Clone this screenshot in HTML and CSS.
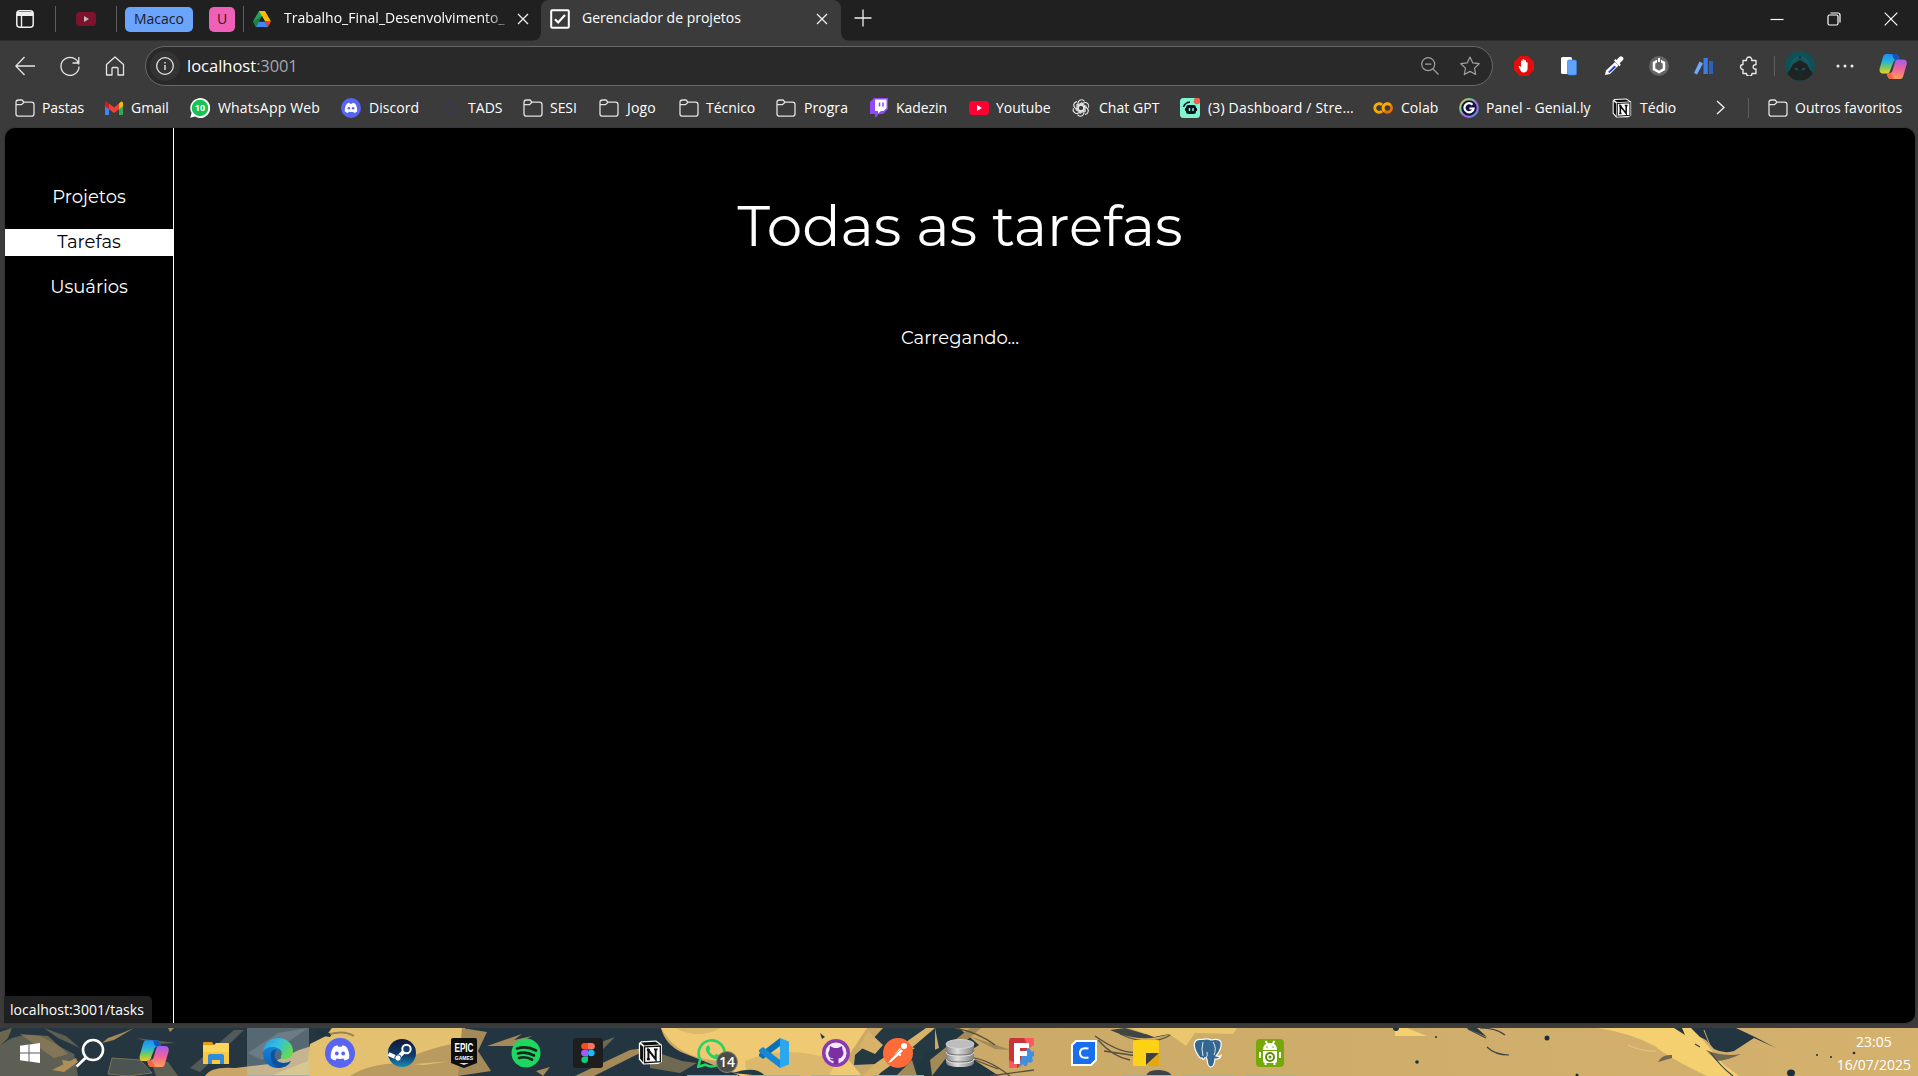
FILE: index.html
```html
<!DOCTYPE html>
<html lang="pt-BR">
<head>
<meta charset="utf-8">
<title>Gerenciador de projetos</title>
<link rel="stylesheet" href="styles.css">
</head>
<body>
<svg class="defs" aria-hidden="true">
  <defs>
    <linearGradient id="cpA" x1="0" y1="0" x2="0" y2="1"><stop offset="0" stop-color="#1b8df5"/><stop offset=".4" stop-color="#2bb4d8"/><stop offset=".7" stop-color="#7ccb55"/><stop offset="1" stop-color="#f7cb2d"/></linearGradient>
    <linearGradient id="cpB" x1="0" y1="0" x2="0" y2="1"><stop offset="0" stop-color="#a35df0"/><stop offset=".5" stop-color="#f0629a"/><stop offset="1" stop-color="#ffa057"/></linearGradient>
    <linearGradient id="edA" x1="0" y1="0" x2="1" y2=".5"><stop offset="0" stop-color="#2596e2"/><stop offset=".5" stop-color="#32bfe0"/><stop offset="1" stop-color="#63d957"/></linearGradient>
    <linearGradient id="edB" x1="0" y1="0" x2="0" y2="1"><stop offset="0" stop-color="#1782d6"/><stop offset="1" stop-color="#0b62b5"/></linearGradient>
    <linearGradient id="stm" x1="0" y1="0" x2="0" y2="1"><stop offset="0" stop-color="#141738"/><stop offset=".6" stop-color="#0e3d6d"/><stop offset="1" stop-color="#168bb8"/></linearGradient>
    <linearGradient id="met" x1="0" x2="1"><stop offset="0" stop-color="#858585"/><stop offset=".4" stop-color="#dedede"/><stop offset="1" stop-color="#808080"/></linearGradient>
    <linearGradient id="gen" x1="0" y1="0" x2="1" y2="1"><stop offset="0" stop-color="#f8b83c"/><stop offset=".3" stop-color="#73d08c"/><stop offset=".6" stop-color="#b35bf0"/><stop offset="1" stop-color="#37a2f0"/></linearGradient>
    <symbol id="folder" viewBox="0 0 20 20"><path d="M1 4.500a2.500 2.500 0 0 1 2.500-2.500H7l2 2.200h7.500a2.500 2.500 0 0 1 2.500 2.500v9a2.500 2.500 0 0 1-2.500 2.500h-13A2.500 2.500 0 0 1 1 15.700zM1 6.700h5.500L9 4.200" fill="none" stroke="#e2e2e2" stroke-width="1.300"/></symbol>
    <symbol id="close" viewBox="0 0 12 12"><path d="M1 1l10 10M11 1L1 11" fill="none" stroke="#eee" stroke-width="1.300"/></symbol>
    <symbol id="copilot" viewBox="0 0 28 28"><path d="M7 2h9c2 0 3 1 3.600 3l1 3h-3c-2 0-3 1-3.500 3L11 19c-.7 2-1.700 2.500-3.500 2.500H4C1 21.500 0 19 .8 16L4 5c.7-2 1.500-3 3-3z" fill="url(#cpA)"/><path d="M13 2h3c2 0 3 1 3.600 3l1 3h-4C14.500 8 14 4 13 2z" fill="#1554b8"/><path d="M21 27h-9c-2 0-3-1-3.500-3l-1-3H10c2 0 3-.8 3.500-2.600L16 10c.6-2 1.600-2.600 3.500-2.600H24c3 0 4.400 2 3.600 5l-3.200 11.100C23.800 26 23 27 21 27z" fill="url(#cpB)"/><path d="M15 27h-3c-2 0-3-1-3.500-3l-1-3H10c3 0 4 4 5 6z" fill="#f06543"/></symbol>
    <symbol id="discord" viewBox="0 0 30 30"><circle cx="15" cy="15" r="15" fill="#5865f2"/><path d="M5.800 20.300C5.200 15.700 6.600 11.500 8.800 8.700c1.200-.8 2.600-1.300 3.700-1.400l.8 1.400h3.400l.8-1.400c1.100.1 2.500.6 3.700 1.400 2.200 2.800 3.600 7 3 11.600-1.500 1.200-3 1.900-4.600 2.200l-1.100-1.900c-2.300.5-4.700.5-7 0l-1.100 1.900c-1.600-.3-3.100-1-4.600-2.200z" fill="#fff"/><circle cx="11.800" cy="15.500" r="1.900" fill="#5865f2"/><circle cx="18.200" cy="15.500" r="1.900" fill="#5865f2"/></symbol>
    <symbol id="notion" viewBox="0 0 24 24"><path d="M3 1.200L17.500.5 23 4.500V21L19.500 23 5 23.500.8 18.500V3z" fill="#fff"/><path d="M2.800 2.500L17 1.700l3.800 2.600L6 5.200z" fill="#111"/><path d="M2 4l3 2.500v14.800L2 18z" fill="#111"/><path d="M6.300 6.600L21.500 5.800v15L6.300 21.800z" fill="#fff" stroke="#111" stroke-width="1.300"/><path d="M10 18.500V9.500l7 9V9M8.500 9.500h3M15.300 9h3.500M8.500 18.500h3" fill="none" stroke="#111" stroke-width="1.900"/></symbol>
    <symbol id="wa" viewBox="0 0 30 30"><path d="M1.200 28.800L3.200 21.500A13 13 0 1 1 8.300 26.700z" fill="none" stroke="#25d366" stroke-width="2.600"/><path d="M10 8c1-1 2-.8 2.400.2l1 2.500c.2.800-1.500 1.700-1 2.500 1 2 2.600 3.400 4.700 4.200.9.300 1.600-1.900 2.500-1.500l2.600 1.300c1 .5.300 2.400-.6 3.100-2.500 1.900-6.400 0-9-2.400C9.700 15 7.300 10.900 10 8z" fill="#25d366"/></symbol>
    <path id="petal" d="M7 10.500V5.300a3.600 3.600 0 0 1 6.500-2M7 8.700l4.400-2.600 4 2.300"/>
  </defs>
</svg>

<div class="screen">
  <header class="tabstrip">
    <div class="strip-left">
      <svg class="ico-ws" viewBox="0 0 18 18"><rect x=".8" y=".8" width="16.400" height="16.400" rx="3" fill="none" stroke="#eee" stroke-width="1.500"/><path d="M1 2h16v4H1z" fill="#eee"/><path d="M5.500 5v12" stroke="#eee" stroke-width="1.400"/></svg>
      <i class="sep"></i>
      <svg class="ico-pin" viewBox="0 0 20 14"><rect width="20" height="14" rx="3.500" fill="#7d132b"/><path d="M8 4l5 3-5 3z" fill="#bbb"/></svg>
      <i class="sep"></i>
      <span class="group blue">Macaco</span>
      <span class="group pink">U</span>
      <i class="sep"></i>
    </div>
    <div class="tab">
      <svg class="ico-drive" viewBox="0 0 18 16"><path d="M6 0h6l-9 16L0 10.500z" fill="#1fa463"/><path d="M6 0h6l6 10.500h-6z" fill="#fbbc04"/><path d="M0 10.500L3 16l3-5.500L9 5z" fill="#188038"/><path d="M6 10.500h6L15 16H3z" fill="#4285f4"/><path d="M12 10.500h6L15 16z" fill="#ea4335"/><path d="M9 5.200l3 5.300H6z" fill="#202020"/></svg>
      <span class="tab-title faded">Trabalho_Final_Desenvolvimento_</span>
      <svg class="ico-x"><use href="#close"/></svg>
    </div>
    <div class="tab active">
      <svg class="ico-check" viewBox="0 0 20 20"><rect x="1.200" y="1.200" width="17.600" height="17.600" rx="1" fill="none" stroke="#fff" stroke-width="2"/><path d="M5 10.200l3.200 3.300L15 6" fill="none" stroke="#fff" stroke-width="2.200"/></svg>
      <span class="tab-title">Gerenciador de projetos</span>
      <svg class="ico-x"><use href="#close"/></svg>
    </div>
    <svg class="ico-plus" viewBox="0 0 18 18"><path d="M9 .5v17M.5 9h17" stroke="#eee" stroke-width="1.300"/></svg>
    <div class="window-buttons">
      <svg viewBox="0 0 14 14"><path d="M.5 7.500h13" stroke="#fff" stroke-width="1.200"/></svg>
      <svg viewBox="0 0 14 14"><rect x="1" y="3" width="10" height="10" rx="1.500" fill="none" stroke="#fff" stroke-width="1.200"/><path d="M3.500 1H11q2 0 2 2v7.500" fill="none" stroke="#fff" stroke-width="1.200"/></svg>
      <svg viewBox="0 0 14 14"><path d="M.7.700l12.600 12.600M13.300.700L.7 13.300" stroke="#fff" stroke-width="1.200"/></svg>
    </div>
  </header>

  <div class="toolbar">
    <nav class="nav-buttons">
      <svg viewBox="0 0 20 20"><path d="M20 10H1M9.500 1L.8 10l8.700 9" fill="none" stroke="#e6e6e6" stroke-width="1.300"/></svg>
      <svg viewBox="0 0 20 20"><path d="M18.800 8.500A9 9 0 1 0 19 10.500M18.800 1v6h-6.300" fill="none" stroke="#e6e6e6" stroke-width="1.300"/></svg>
      <svg viewBox="0 0 20 20"><path d="M1.500 8.500L10 1l8.500 7.500V19h-5.500v-6.500q0-1-1-1H8q-1 0-1 1V19H1.500z" fill="none" stroke="#e6e6e6" stroke-width="1.300" stroke-linejoin="round"/></svg>
    </nav>
    <div class="address">
      <span class="info"><svg viewBox="0 0 18 18"><circle cx="9" cy="9" r="8.300" fill="none" stroke="#e6e6e6" stroke-width="1.300"/><path d="M9 8v5M9 5v1.500" stroke="#e6e6e6" stroke-width="1.400"/></svg></span>
      <span class="url">localhost<span>:3001</span></span>
      <svg class="ico-zoom" viewBox="0 0 18 18"><circle cx="7.200" cy="7.200" r="6.500" fill="none" stroke="#a0a0a0" stroke-width="1.200"/><path d="M12 12l5.500 5.500M4 7.200h6.400" stroke="#a0a0a0" stroke-width="1.200"/></svg>
      <svg class="ico-star" viewBox="0 0 20 20"><path d="M10 1l2.800 5.900 6.400.8-4.700 4.400 1.200 6.400L10 15.400l-5.700 3.100 1.200-6.400L.8 7.700l6.400-.8z" fill="none" stroke="#a0a0a0" stroke-width="1.200" stroke-linejoin="round"/></svg>
    </div>
    <div class="extensions">
      <svg viewBox="0 0 20 20"><path d="M6 0h8l6 6v8l-6 6H6l-6-6V6z" fill="#e40d0d"/><path d="M4.500 10.500l1.300-.7 1.200 1.400V5q.8-1 1.600 0V3.500q.9-1 1.700 0V4.500q.9-1 1.700 0V6.500q1.200-.8 1.600 0v6q-.4 4-4 4-2.500 0-3.300-2.500z" fill="#fff"/></svg>
      <svg viewBox="0 0 20 20"><rect x="2" y="1" width="11" height="17" rx="1.500" fill="#fff"/><rect x="8.500" y="4" width="9" height="15" rx="1.500" fill="#60a5fa" stroke="#3b7fe0" stroke-width=".7"/></svg>
      <svg viewBox="0 0 20 20"><path d="M1 19l1-4.500L11 6l3.500 3.500L6 18z" fill="#fff"/><path d="M4 16l6.500-6.500 1.500 1.500-6.500 6z" fill="#2343c5"/><path d="M10 4.500l5.500 5.700 1.200-1.500-1-1.500 3.500-3.500q.8-2-1-3-1.500-1-3 .5L12.500 4l-1.200-1z" fill="#fff"/></svg>
      <svg viewBox="0 0 20 20"><circle cx="10" cy="10" r="10" fill="#666"/><path d="M10 4l5 2.800v6.400L10 16l-5-2.800V6.800z" fill="#666" stroke="#fff" stroke-width="2.500"/><path d="M8 3h4v4H8z" fill="#666"/><path d="M10 2v4" stroke="#fff" stroke-width="2"/></svg>
      <svg viewBox="0 0 20 20"><path d="M5.500 5.500l3.500 2-6 11-3-1.500z" fill="#76a7fa"/><path d="M9.500 2h4.300v16H9.500z" fill="#3c7cea"/><path d="M15 5h4v13h-4z" fill="#2b5fc0"/></svg>
      <svg viewBox="0 0 20 20"><path d="M4 4.500h3.500a2.700 2.700 0 1 1 5.200 0H17v4.300a2.200 2.200 0 1 0 0 4.200v4.500h-4a2.700 2.700 0 0 1-5.500 0H4v-4a2.500 2.500 0 1 1 0-5z" fill="none" stroke="#e6e6e6" stroke-width="1.400" stroke-linejoin="round"/></svg>
    </div>
    <i class="sep tall"></i>
    <svg class="avatar" viewBox="0 0 30 30"><circle cx="15" cy="15" r="15" fill="#105158"/><circle cx="15" cy="15" r="10" fill="#17646a" opacity=".5"/><path d="M15 9l7 4 3 6 3 3a15 15 0 0 1-26 0l3-3 3-6z" fill="#202322"/><path d="M15 5v3M10.500 18.500l3 1.500M19.500 18.500l-3 1.500M13 24l2-1 2 1" stroke="#0a3338" stroke-width="1.500"/><path d="M10 17.500l3 1M20 17.500l-3 1" stroke="#167a83"/></svg>
    <svg class="dots" viewBox="0 0 18 4"><circle cx="2" cy="2" r="1.500" fill="#eee"/><circle cx="9" cy="2" r="1.500" fill="#eee"/><circle cx="16" cy="2" r="1.500" fill="#eee"/></svg>
    <svg class="copilot"><use href="#copilot"/></svg>
  </div>

  <div class="bookmarks">
    <a class="tight"><svg><use href="#folder"/></svg>Pastas</a>
    <a class="tight"><svg viewBox="0 0 20 20"><path d="M1 5v12h4V8z" fill="#4285f4"/><path d="M15 8v9h4V5z" fill="#34a853"/><path d="M15 5.500l2-1.800q2-.5 2 1.500v3l-4 3z" fill="#fbbc04"/><path d="M5 5.500L3 3.700q-2-.5-2 1.500v3l4 3z" fill="#c5221f"/><path d="M5 5.500l5 4 5-4v5.700l-5 3.800-5-3.800z" fill="#ea4335"/></svg>Gmail</a>
    <a class="loose"><svg viewBox="0 0 20 20"><path d="M.3 19.700L1.600 15A10 10 0 1 1 5 18.500z" fill="#fff"/><circle cx="10" cy="10" r="8.300" fill="#16c455"/><text class="badge-text" x="10" y="13.300" text-anchor="middle">10</text></svg>WhatsApp Web</a>
    <a><svg><use href="#discord"/></svg>Discord</a>
    <a class="shift"><svg viewBox="0 0 20 20"><circle cx="11" cy="11" r="4.500" fill="none" stroke="#3d355c" stroke-width="2.500" stroke-dasharray="2 1.500"/></svg>TADS</a>
    <a class="tight"><svg><use href="#folder"/></svg>SESI</a>
    <a class="loose"><svg><use href="#folder"/></svg>Jogo</a>
    <a class="tight"><svg><use href="#folder"/></svg>Técnico</a>
    <a><svg><use href="#folder"/></svg>Progra</a>
    <a class="tight"><svg viewBox="0 0 20 20"><path d="M5 0h14v11l-5 5h-4l-4 4v-4H1V4z" fill="#9146ff"/><path d="M6 1.500h11.500v8.800L14.500 13H12l-3 2.500V13H6z" fill="#fff"/><path d="M10.500 4.500v4M14 4.500v4" stroke="#9146ff" stroke-width="1.500"/></svg>Kadezin</a>
    <a class="tight"><svg viewBox="0 0 20 20"><rect y="3" width="20" height="14" rx="3.500" fill="#ff0033"/><path d="M8 7l5 3-5 3z" fill="#fff"/></svg>Youtube</a>
    <a><svg viewBox="0 0 20 20"><g fill="none" stroke="#e8e8e8" stroke-width="1.100"><use href="#petal"/><use href="#petal" transform="rotate(60 10 10)"/><use href="#petal" transform="rotate(120 10 10)"/><use href="#petal" transform="rotate(180 10 10)"/><use href="#petal" transform="rotate(240 10 10)"/><use href="#petal" transform="rotate(300 10 10)"/></g></svg>Chat GPT</a>
    <a class="loose"><svg viewBox="0 0 20 20"><rect width="20" height="20" rx="3.500" fill="#80f5d2"/><path d="M3.500 9Q5 4.500 10 4" fill="none" stroke="#09161d" stroke-width="1.500"/><rect x="6" y="7" width="10" height="9" rx="2.500" fill="#09161d"/><path d="M5 10h12v3H5z" fill="#09161d"/><path d="M9.500 10v3M13 10v3" stroke="#80f5d2" stroke-width="1.500"/><circle cx="17" cy="3" r="3.300" fill="#f45d48"/></svg>(3) Dashboard / Stre...</a>
    <a><svg viewBox="0 0 20 20"><path d="M9 6.800A4.300 4.300 0 1 0 9 13.200" fill="none" stroke="#f9ab00" stroke-width="2.900"/><circle cx="14.300" cy="10" r="4.200" fill="none" stroke="#e8710a" stroke-width="2.900"/><path d="M11.300 13a4.200 4.200 0 0 1 6-6" fill="none" stroke="#f9ab00" stroke-width="2.900"/></svg>Colab</a>
    <a class="snug"><svg viewBox="0 0 20 20"><circle cx="10" cy="10" r="8.800" fill="#14123a" stroke="url(#gen)" stroke-width="2.200"/><path d="M13.500 6.700A4.600 4.600 0 1 0 14.600 10.500H10.500" fill="none" stroke="#fff" stroke-width="2.200"/></svg>Panel - Genial.ly</a>
    <a><svg><use href="#notion"/></svg>Tédio</a>
    <svg class="chevron" viewBox="0 0 9 15"><path d="M1 1l7 6.500L1 14" fill="none" stroke="#eee" stroke-width="1.400"/></svg>
    <i class="sep"></i>
    <a class="snug"><svg><use href="#folder"/></svg>Outros favoritos</a>
  </div>

  <div class="viewport">
    <div class="page">
      <aside class="sidebar">
        <a>Projetos</a>
        <a class="selected">Tarefas</a>
        <a>Usuários</a>
      </aside>
      <main class="content">
        <h1>Todas as tarefas</h1>
        <p>Carregando...</p>
      </main>
    </div>
    <div class="status">localhost:3001/tasks</div>
  </div>

  <footer class="taskbar">
    <svg class="wallpaper" viewBox="0 0 1918 48" preserveAspectRatio="none">
      <defs><linearGradient id="sand" x1="0" x2="1"><stop offset="0" stop-color="#c4a365"/><stop offset=".4" stop-color="#c9a867"/><stop offset="1" stop-color="#d4b16d"/></linearGradient></defs>
      <rect width="1918" height="48" fill="url(#sand)"/>
      <path d="M0 0h332l-8 10-12 10-6 18-26 10H0z" fill="#263640"/>
      <path d="M0 18q15-14 40-10l34 18 4 22H0z" fill="#5d5f54"/>
      <path d="M0 4l12-4-4 10-8 8zM20 6l28 2 20 18-14 4z" fill="#9b8558" opacity=".6"/>
      <path d="M52 42l24-12 2 4-14 10zM62 32l13 2-10 8zM134 0l-20 12-12 3 6-5 14-5zM168 0l6 0-4 4z" fill="#bb9858" opacity=".85"/>
      <path d="M112 30l28 2 12 13-24 3-20-2z" fill="#4b5450" stroke="#7a7458" stroke-width="1"/>
      <path d="M136 10l40 5-20 1zM44 0l22 8 14 12-22-10zM150 30l18 4 10 14h-22z" fill="#6c6a57" opacity=".8"/>
      <path d="M190 40l44-38 10 0-44 42z" fill="#4f5a59"/>
      <path d="M205 48q6-10 30-8l34-4 30-14 16-5v31z" fill="#c9a667"/>
      <path d="M248 25l30-20 30-5-46 32z" fill="#47535a"/>
      <path d="M332 0h133q-8 19-5 32l-33 9q-33-15-73 7H270l38-15 2-17 18-9z" fill="#e3c170"/>
      <path d="M350 48q25-17 74-11l40-6v17zM390 38q40-20 75-24v18z" fill="#b99a60"/>
      <path d="M316 0l16 6-2 3-14-2z" fill="#223440"/>
      <path d="M330 6q14-4 24 2" fill="none" stroke="#9a8356" stroke-width="2"/>
      <path d="M465 0h196q4 16 20 24l60 24H458l8-24z" fill="#233541"/>
      <path d="M462 0l25 4-9 19 13 20-33 5zM487 18l35-12-8 6 18-4-18 10zM536 43l14-4-7 9zM575 48l55-26 22-3-26 13-32 16z" fill="#a38a58"/>
      <path d="M590 18l25-9-12 12zM650 22l32 11 15 2-17 10-30-5z" fill="#6e6950"/>
      <path d="M661 0h206l-20 30 15 18H740l-20-15q-42-2-59-33z" fill="#f0ca72"/>
      <path d="M675 0q25 12 45 0zM745 33q40-18 92 0l-8 15h-82z" fill="#d1ae68" opacity=".65"/>
      <path d="M732 45q25-8 33 3M820 5l5 4-3 2zM855 27l16-14 12-13h52v48h-57l12-17-14 5-22 1z" fill="#253943"/>
      <path d="M868 3l15 14-8 9-16-7zM876 35L926 0h9L894 35l-18 13h-14zM905 18l-13 16 23-14z" fill="#d7b268"/>
      <path d="M935 0l24 0 20 17-14 9 34 22H912l15-23 12-5z" fill="#223640"/>
      <path d="M930 32l40-32h11l-35 30-14 18zM896 48l16-16 5 16zM969 8l26 13 16 1z" fill="#a28a58"/>
      <path d="M955 0q23 4 40 17M960 30q22-4 50 18M975 32l23 9M990 48l44-6M1095 8q36 25 50 12M1098 12q15 17 32 20M1120 6q30 14 52 0M1104 23l40 6" fill="none" stroke="#58503e" stroke-width="1.300"/>
      <path d="M1110 2q30 14 60 4h-25l-20-6zM1146 48q2-7 14-6 10 1 12 6z" fill="#3f4544"/>
      <path d="M1130 0h107l-4 6-38-1-9 13-17-12-15 3z" fill="#eac66e"/>
      <path d="M1395 0h12l20 8h-32zM1598 0h95l30 36 16 12h-32q-40-19-52-30-25-13-57-18z" fill="#f5d070"/>
      <path d="M1674 0h8l3 7zM1691 0h45l19 9 21 11-22-10-20 13q-10 3-20-2l-8-9-6-3z" fill="#233541"/>
      <path d="M1706 22q17 7 35 4-15 7-24 7zM1658 34q4-8 14-7v3z" fill="#71694f"/>
      <path d="M1704 2l7 18" fill="none" stroke="#c9b06e" stroke-width="1"/>
      <path d="M1695 16l5 3M1468 1l18 9M1480 0q16 0 25 7M1487 19q8 8 22 8M1711 25q9 13 22 23" fill="none" stroke="#3d4547" stroke-width="1.200"/>
      <path d="M1466 0h11l10 9z" fill="#2a3a42"/>
      <path d="M1628 17q15 7 28 6" fill="none" stroke="#e7c783"/>
      <g fill="#1b303c"><circle cx="1417" cy="34" r="1.800"/><circle cx="1547" cy="10" r="2.500"/><ellipse cx="1791" cy="45" rx="4" ry="3.500"/><circle cx="1396" cy="0" r="3"/><circle cx="1436" cy="9" r="1"/><circle cx="1817" cy="27" r="1"/><circle cx="1831" cy="29" r="1"/><circle cx="1854" cy="25" r="1.300"/><circle cx="1577" cy="47" r="1.500"/></g>
    </svg>
    <div class="apps">
      <span class="start"><svg class="win" viewBox="0 0 20 20"><path d="M0 2.800l8.500-1.200v8H0zM9.500 1.500L20 0v9.600H9.500zM0 10.500h8.500v8L0 17.200zM9.500 10.500H20V20L9.500 18.600z" fill="#fff"/></svg></span>
      <span class="search"><svg viewBox="0 0 30 30"><circle cx="18" cy="12" r="10" fill="none" stroke="#fff" stroke-width="2.600"/><path d="M11 19.500L1.500 28.500" stroke="#fff" stroke-width="2.800"/></svg></span>
      <span><svg><use href="#copilot"/></svg></span>
      <span><svg viewBox="0 0 30 30"><path d="M2 5q0-1 1-1h8l2 3H2z" fill="#e09b12"/><path d="M2 7h11l2-2h12q1 0 1 1v20H2z" fill="#fdd75c"/><path d="M2 14h26v12H2z" fill="#f9c942"/><path d="M7 26V18q0-2 2-2h12q2 0 2 2v8h-4v-4h-8v4z" fill="#2f8ad8"/></svg></span>
      <span class="active"><svg viewBox="0 0 30 30"><path d="M0 14C1 5 7 0 15 0c9 0 15 6 15 13 0 5-4 8-8 8-3 0-5-1-4-3 2-3 0-7-5-8C7 9 2 11 0 14z" fill="url(#edA)"/><path d="M0 14c2-4 7-6 13-4.500 3 .8 5 2.500 5.600 4.500-2-2-5.600-1-6.600 2-1 5 3 9 9 9 3 0 5-1 7-2-3 5-8 7-13 7C6 30-.5 23 0 14z" fill="url(#edB)"/><path d="M8 15c1-3 3-4 6-3.500-4 3-3.500 13.500 7 13.500 3 0 5-1 7-2-3 5-8 7-13 7C9 27 7 20 8 15z" fill="#0c529f"/></svg></span>
      <span><svg><use href="#discord"/></svg></span>
      <span><svg viewBox="0 0 30 30"><circle cx="15" cy="15" r="14" fill="url(#stm)"/><path d="M1.500 16l9 4 6-6" stroke="#fff" stroke-width="4" fill="none"/><circle cx="19.500" cy="11" r="4.200" fill="#174069" stroke="#fff" stroke-width="2"/><circle cx="11" cy="20" r="3.200" fill="#fff" stroke="#155382"/></svg></span>
      <span><svg viewBox="0 0 30 30"><path d="M2 2q0-2 2-2h22q2 0 2 2v23L15 30 2 25z" fill="#0e0e0e"/><text class="epic" x="15" y="14" text-anchor="middle" textLength="19" lengthAdjust="spacingAndGlyphs">EPIC</text><text class="games" x="15" y="21.500" text-anchor="middle">GAMES</text><path d="M10 25h10l-5 2z" fill="#ddd"/></svg></span>
      <span><svg viewBox="0 0 30 30"><circle cx="15" cy="15" r="14.500" fill="#1ed760"/><path d="M6 10.500q10-3 19 2M7 15.500q8-2.500 16 2M8 20q7-2 13 1.700" fill="none" stroke="#14251a" stroke-width="2.600" stroke-linecap="round"/></svg></span>
      <span><svg viewBox="0 0 30 30"><rect width="30" height="30" rx="3" fill="#1e1e1e"/><path d="M15 5h-3.500a3.300 3.300 0 0 0 0 6.600H15z" fill="#f24e1e"/><path d="M15 5h3.500a3.300 3.300 0 0 1 0 6.600H15z" fill="#ff7262"/><path d="M15 11.700h-3.500a3.300 3.300 0 0 0 0 6.600H15z" fill="#a259ff"/><circle cx="18.300" cy="15" r="3.300" fill="#1abcfe"/><path d="M15 18.400h-3.500a3.300 3.300 0 1 0 3.500 3.300z" fill="#0acf83"/></svg></span>
      <span><svg class="small"><use href="#notion"/></svg></span>
      <span class="run"><svg><use href="#wa"/></svg><b class="count">14</b></span>
      <span class="run"><svg viewBox="0 0 30 30"><path d="M21 0v8L4 21l-4-3v-2z" fill="#0b70ba"/><path d="M21 30v-8L4 9l-4 3v2z" fill="#1687d2"/><path d="M21 0l9 3.500v23L21 30z" fill="#2ba7f0"/></svg></span>
      <span class="run"><svg viewBox="0 0 30 30"><circle cx="15" cy="15" r="14" fill="#8a3bb0"/><circle cx="15" cy="15" r="10.500" fill="#f3eafa"/><path d="M9 8l4 2h4l4-2 .5 4q2 3 0 6-1.500 2.500-4 2.500V26h-5v-3q-3 0-4-3 3 2 4 .5-4-.5-4.800-3-1-3 .8-5.500z" fill="#7b2fa3"/></svg></span>
      <span class="run"><svg viewBox="0 0 30 30"><circle cx="15" cy="15" r="15" fill="#ff6c37"/><path d="M5 25L17 10l3 3L8 24z" fill="#fff"/><path d="M9 20l9-9" stroke="#ff9d77"/><circle cx="21" cy="8" r="3" fill="#fff"/><path d="M14 16l4 1" stroke="#fff" stroke-width="2"/></svg></span>
      <span><svg viewBox="0 0 30 30"><path d="M1 6v18q0 5 14 5t14-5V6z" fill="url(#met)"/><ellipse cx="15" cy="6" rx="14" ry="4.500" fill="#bdbdbd" stroke="#dcdcdc" stroke-width=".8"/><path d="M1 12.500q0 4.500 14 4.500t14-4.500M1 19.500q0 4.500 14 4.500t14-4.500" fill="none" stroke="#707070" stroke-width="1.200"/><path d="M1 13.700q0 4.500 14 4.500t14-4.500M1 20.700q0 4.500 14 4.500t14-4.500" fill="none" stroke="#e4e4e4" stroke-width=".9"/></svg></span>
      <span><svg viewBox="0 0 30 30"><path d="M3 0h20l-3 12-9 18H2V3z" fill="#cb333b"/><path d="M17 0h10v7l-5 3zM2 22l8 4v4H2z" fill="#ff585d"/><path d="M12 30l3-15 7-5 3 4 2-1v5l-2 1 1 4-3 2-2-1-1 4h-3l-1-2z" fill="#418fde"/><path d="M7 5h15v5h-9v3h7v5h-7v8H7z" fill="#fff"/></svg></span>
      <span><svg viewBox="0 0 30 30"><path d="M7 3h20v19l-5 5H3V7z" fill="#196ef0" stroke="#fff" stroke-width="2"/><path d="M19.500 10.500q-8.500-1.500-8.500 4.500t8.500 4.500" fill="none" stroke="#fff" stroke-width="2"/></svg></span>
      <span class="run"><svg viewBox="0 0 30 30"><rect x="2" y="2" width="26" height="26" rx="1.500" fill="#fcd116"/><path d="M28 15v13H15z" fill="#e5a70a"/><path d="M15 15h13L15 27z" fill="#3f3f3f"/></svg></span>
      <span class="run"><svg viewBox="0 0 30 30"><path d="M9 1.500Q15 0 18 2q8-2 10 2 1 7-5 14 3 1 5-.5-1 4-6 3.500-1 8-4 8-3.500 0-4-8-2-3-3 0-1 1-2-1-2 1-4-3Q.5 10 1.500 5 3 .5 9 1.500z" fill="#336791" stroke="#fff" stroke-width="1.200"/><path d="M10 4Q8 11 10 18M20 4q4 6 1 13M13 20q2-2 1-6" fill="none" stroke="#dbe6ef" stroke-width="1"/></svg></span>
      <span class="run"><svg viewBox="0 0 30 30"><rect x="1" y="1" width="28" height="28" rx="4" fill="#75a90a"/><path d="M8 12q0-7 7-7t7 7zM8 13h14v10q0 2-2 2H10q-2 0-2-2z" fill="#fff"/><path d="M5 14v6M25 14v6M10.500 25v2M19.500 25v2M10.500 3l2 3M19.500 3l-2 3" stroke="#fff" stroke-width="2"/><circle cx="15" cy="19" r="4" fill="none" stroke="#5f8a0a" stroke-width="2"/><circle cx="15" cy="19" r="1.500" fill="#5f8a0a"/><circle cx="12" cy="9" r=".8" fill="#75a90a"/><circle cx="18" cy="9" r=".8" fill="#75a90a"/></svg></span>
    </div>
    <div class="clock"><span>23:05</span><span>16/07/2025</span></div>
  </footer>
</div>
</body>
</html>
```
FILE: styles.css
```css
* { box-sizing: border-box; }
body { margin: 0; background: #3b3b3b; font-family: "Open Sans", "Noto Sans", sans-serif; font-size: 14px; color: #fff; overflow: hidden; }
svg { display: block; flex: none; }
.defs { position: absolute; width: 0; height: 0; }
.screen { width: 1918px; height: 1076px; display: flex; flex-direction: column; }
.sep { width: 1px; height: 26px; background: #5e5e5e; flex: none; }

/* Tab strip */
.tabstrip { height: 41px; background: #202020; display: flex; align-items: flex-start; border-bottom: 1px solid #2d2d2d; flex: none; white-space: nowrap; }
.strip-left { width: 245px; height: 38px; padding-left: 16px; display: flex; align-items: center; flex: none; }
.ico-ws { width: 18px; height: 18px; margin-right: 21px; }
.ico-pin { width: 20px; height: 14px; margin: 0 20px; }
.group { height: 25px; line-height: 24px; border-radius: 5px; color: #1d1d1d; text-align: center; }
.blue { width: 68px; margin-left: 8px; background: #6ba4fc; }
.pink { width: 26px; margin: 0 8px 0 16px; background: #f060b8; }
.tab { width: 296px; height: 37px; padding-left: 8px; display: flex; align-items: center; flex: none; }
.ico-drive { width: 18px; height: 16px; margin-right: 13px; }
.tab-title { flex: none; padding-bottom: 2px; }
.faded { width: 222px; margin-right: 11px; -webkit-mask-image: linear-gradient(90deg, #000 90%, rgba(0, 0, 0, .3)); mask-image: linear-gradient(90deg, #000 90%, rgba(0, 0, 0, .3)); }
.ico-x { width: 12px; height: 12px; }
.tab.active { position: relative; width: 300px; height: 41px; background: #3b3b3b; border-radius: 8px 8px 0 0; padding: 0 13px 4px 9px; }
.tab.active::before, .tab.active::after { content: ""; position: absolute; bottom: 0; width: 8px; height: 8px; }
.tab.active::before { left: -8px; background: radial-gradient(circle at 0 0, transparent 7.5px, #3b3b3b 8px); }
.tab.active::after { right: -8px; background: radial-gradient(circle at 100% 0, transparent 7.5px, #3b3b3b 8px); }
.ico-check { width: 20px; height: 20px; margin-right: 12px; }
.tab.active .ico-x { margin-left: auto; }
.ico-plus { width: 18px; height: 18px; margin: 9px 0 0 13px; }
.window-buttons { margin-left: auto; display: flex; gap: 43px; padding: 12px 20px 0 0; }
.window-buttons svg { width: 14px; height: 14px; }

/* Address row */
.toolbar { height: 50px; display: flex; align-items: center; flex: none; }
.nav-buttons { display: flex; gap: 25px; padding-left: 15px; width: 145px; }
.nav-buttons svg { width: 20px; height: 20px; }
.address { width: 1348px; height: 40px; border: 1px solid #686868; border-radius: 20px; background: #292929; display: flex; align-items: center; padding: 0 12px 0 4px; flex: none; }
.info { width: 30px; height: 30px; border-radius: 50%; background: #333; display: grid; place-items: center; margin-right: 7px; }
.info svg { width: 18px; height: 18px; }
.url { font-size: 16.500px; padding-bottom: 1px; }
.url span { color: #a3a8ad; letter-spacing: -.1px; }
.ico-zoom { width: 18px; height: 18px; margin: 0 21px 0 auto; }
.ico-star { width: 20px; height: 20px; }
.extensions { display: flex; gap: 25px; padding-left: 21px; width: 281px; }
.extensions svg { width: 20px; height: 20px; }
.sep.tall { height: 20px; }
.avatar { width: 30px; height: 30px; margin-left: 10px; }
.dots { width: 18px; height: 4px; margin: 0 25px 0 21px; }
.copilot { width: 28px; height: 28px; }

/* Favourites */
.bookmarks { height: 37px; padding: 0 0 4px 15px; display: grid; grid-template-columns: 89px 86px 151px 98px 84px 76px 80px 97px 93px 100px 102px 109px 193px 86px 153px 104px 32px 20px 140px; align-items: center; flex: none; white-space: nowrap; }
.bookmarks a { display: flex; align-items: center; gap: 8px; letter-spacing: .05px; }
.bookmarks a.tight { gap: 7px; letter-spacing: -.05px; }
.bookmarks a.snug { gap: 7px; letter-spacing: .06px; }
.bookmarks a.loose { letter-spacing: .18px; }
.bookmarks a.shift { gap: 9px; }
.bookmarks a svg { width: 20px; height: 20px; }
.bookmarks .sep { height: 20px; }
.chevron { width: 9px; height: 15px; }
.badge-text { font: bold 9px "Open Sans", sans-serif; fill: #fff; }

/* Web page */
.viewport { height: 900px; padding: 0 3px 5px 5px; position: relative; flex: none; }
.page { height: 895px; background: #000; border-radius: 10px 10px 10px 0; display: flex; font-family: Montserrat, Inter, sans-serif; box-shadow: 0 0 2px #222; }
.sidebar { width: 169px; border-right: 1px solid #fff; padding-top: 56px; display: flex; flex-direction: column; gap: 18px; }
.sidebar a { height: 27px; line-height: 27px; text-align: center; font-size: 18px; }
.sidebar .selected { background: #fff; color: #000; }
.content { flex: 1; text-align: center; padding-right: 169px; }
.content h1 { margin: 62px 0 0; font-size: 56.500px; font-weight: 400; line-height: 72px; }
.content p { margin: 63px 0 0; font-size: 18px; line-height: 27px; }
.status { position: absolute; left: 4px; bottom: 5px; width: 148px; height: 27px; padding-left: 6px; line-height: 27px; background: #202020; border-radius: 0 5px 0 0; white-space: nowrap; letter-spacing: .05px; }

/* Taskbar */
.taskbar { height: 48px; position: relative; display: flex; justify-content: space-between; flex: none; }
.wallpaper { position: absolute; inset: 0; width: 1918px; height: 48px; }
.apps { display: flex; position: relative; }
.apps > span { position: relative; width: 62px; height: 48px; display: flex; justify-content: center; padding-top: 10px; }
.apps > .start { width: 60px; }
.apps > .search { width: 63px; padding-right: 3px; }
.apps svg { width: 30px; height: 30px; }
.apps svg.win { width: 20px; height: 20px; margin-top: 5px; }
.apps svg.small { width: 25px; height: 25px; margin-top: 2px; }
.apps > .active { background: rgba(190, 210, 220, .32); border-bottom: 1px solid #76b9ed; }
.apps > .run::after { content: ""; position: absolute; bottom: 0; left: 6px; width: 51px; height: 1px; background: #76b9ed; }
.count { position: absolute; left: 35px; top: 23px; width: 22px; height: 22px; border-radius: 50%; background: #4c4c47; border: 1px solid #888579; font-size: 14px; font-weight: 600; line-height: 20px; text-align: center; }
.epic { font: bold 13px "Liberation Sans", sans-serif; fill: #fff; }
.games { font: bold 5px "Liberation Sans", sans-serif; fill: #fff; }
.clock { position: relative; display: flex; flex-direction: column; align-items: center; padding: 2px 7px 0 0; line-height: 23px; }
```
